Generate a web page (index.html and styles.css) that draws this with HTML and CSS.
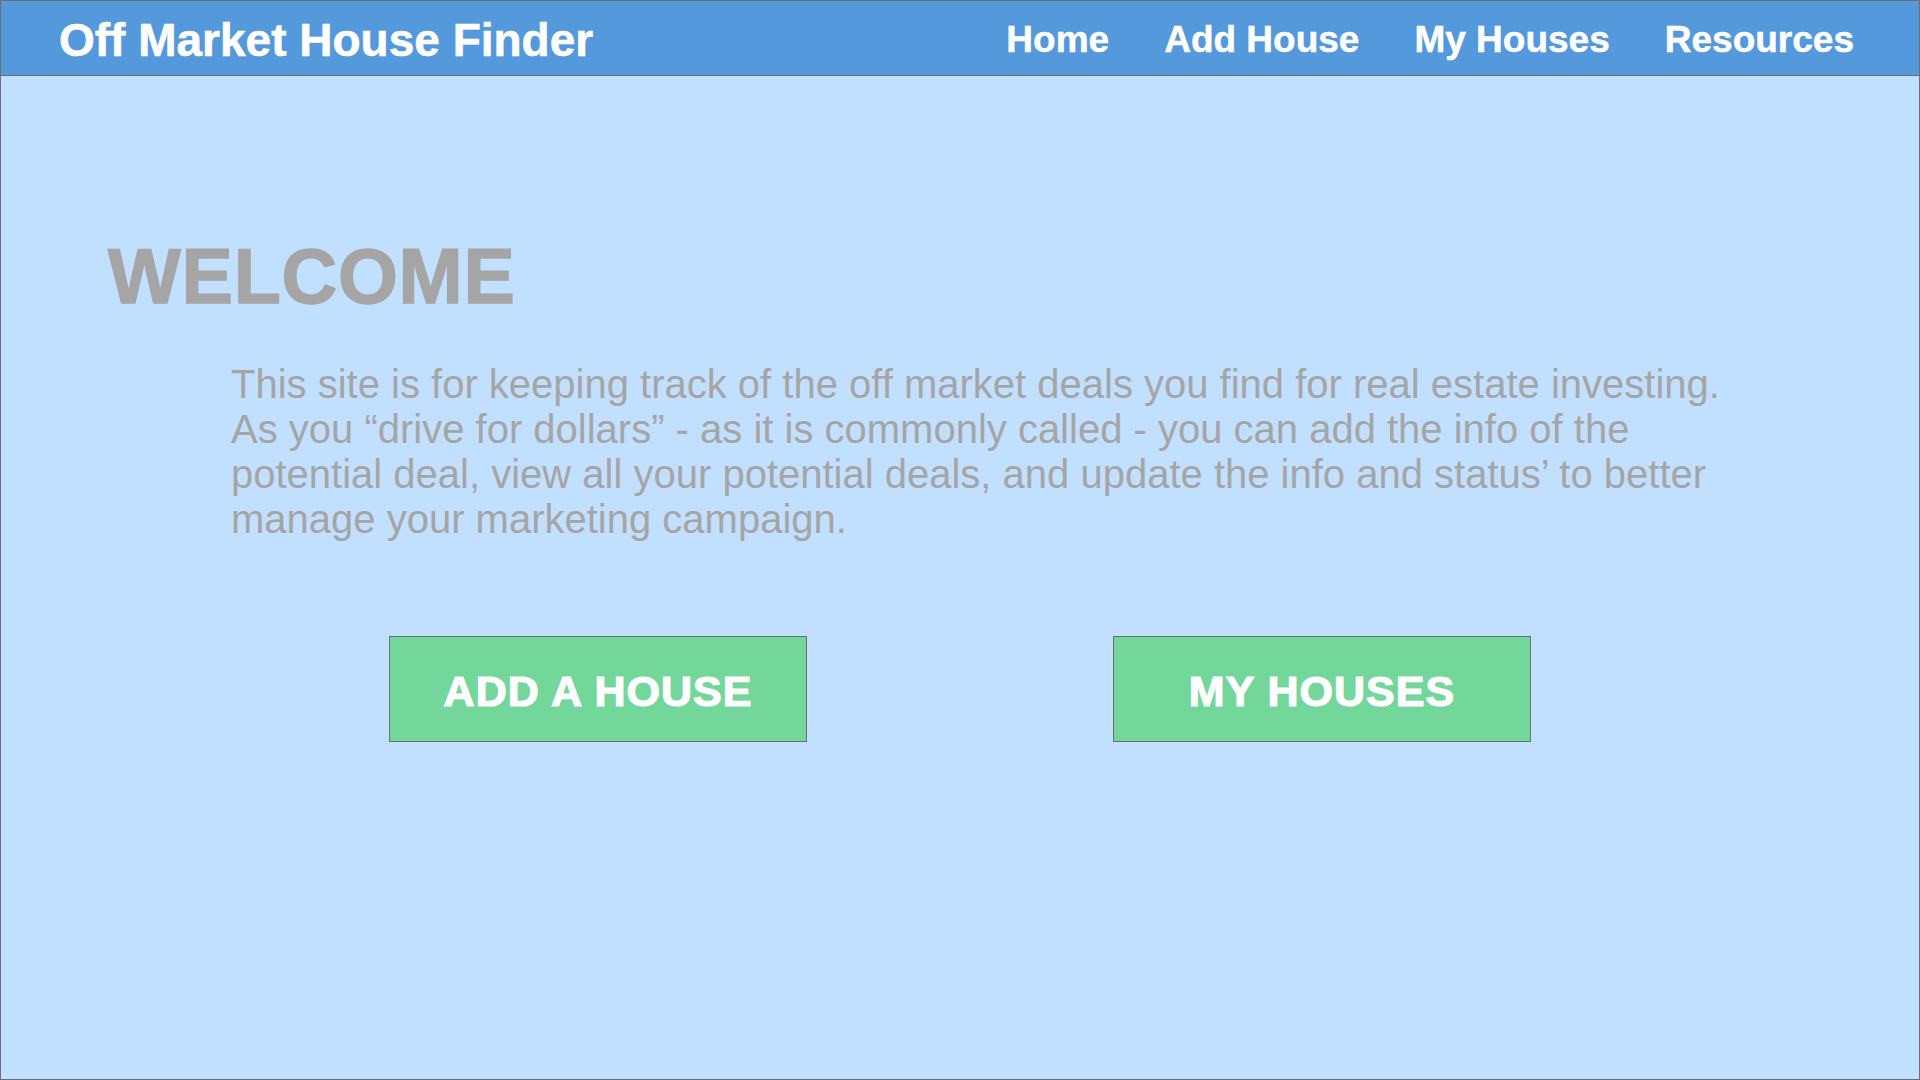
FILE: index.html
```html
<!DOCTYPE html>
<html lang="en">
<head>
<meta charset="utf-8">
<title>Off Market House Finder</title>
<link rel="stylesheet" href="styles.css">
</head>
<body>
<div class="page">
  <header class="topbar">
    <div class="brand">Off Market House Finder</div>
    <nav class="nav">
      <a class="nav-link" href="#">Home</a>
      <a class="nav-link" href="#">Add House</a>
      <a class="nav-link" href="#">My Houses</a>
      <a class="nav-link" href="#">Resources</a>
    </nav>
  </header>
  <main class="main">
    <h1 class="welcome">WELCOME</h1>
    <p class="intro">This site is for keeping track of the off market deals you find for real estate investing.<br>As you “drive for dollars” - as it is commonly called - you can add the info of the<br>potential deal, view all your potential deals, and update the info and status’ to better<br>manage your marketing campaign.</p>
    <div class="actions">
      <a class="btn" href="#">ADD A HOUSE</a>
      <a class="btn" href="#">MY HOUSES</a>
    </div>
  </main>
</div>
</body>
</html>
```
FILE: styles.css
```css
* { box-sizing: border-box; }
html, body { margin: 0; padding: 0; }
body {
  font-family: "Liberation Sans", Arial, sans-serif;
  background: #c1e0ff;
}
.page {
  width: 1920px;
  height: 1080px;
  border: 1px solid #6b6f75;
  background: #c1e0ff;
  display: flex;
  flex-direction: column;
  overflow: hidden;
}
.topbar {
  height: 75px;
  flex: 0 0 75px;
  background: #5499dc;
  border-bottom: 1px solid #6b6f75;
  display: flex;
  align-items: center;
  justify-content: space-between;
  padding: 3px 65px 0 58px;
}
.brand {
  color: #ffffff;
  font-weight: bold;
  font-size: 46px;
  line-height: 1;
  white-space: nowrap;
  -webkit-text-stroke: 0.6px #ffffff;
}
.nav {
  display: flex;
  gap: 55px;
  align-items: center;
}
.nav-link {
  color: #ffffff;
  text-decoration: none;
  font-weight: bold;
  font-size: 37px;
  line-height: 1;
  white-space: nowrap;
  -webkit-text-stroke: 0.5px #ffffff;
}
.main {
  flex: 1;
  padding: 162px 0 0 0;
  display: flex;
  flex-direction: column;
}
.welcome {
  margin: 0 0 48px 107px;
  font-size: 77px;
  line-height: 76px;
  font-weight: bold;
  color: #a5a5a5;
  letter-spacing: 0.8px;
  -webkit-text-stroke: 1.5px #a5a5a5;
}
.intro {
  margin: 0 0 94px 230px;
  font-size: 40px;
  line-height: 45px;
  color: #a5a5a5;
  white-space: nowrap;
}
.actions {
  display: flex;
  justify-content: center;
  gap: 306px;
}
.btn {
  width: 418px;
  height: 106px;
  background: #73d69b;
  border: 1px solid #6e6e6e;
  color: #ffffff;
  text-decoration: none;
  font-weight: bold;
  font-size: 43px;
  letter-spacing: 1px;
  display: flex;
  align-items: center;
  justify-content: center;
  padding-top: 4px;
  -webkit-text-stroke: 1.2px #ffffff;
}
```
